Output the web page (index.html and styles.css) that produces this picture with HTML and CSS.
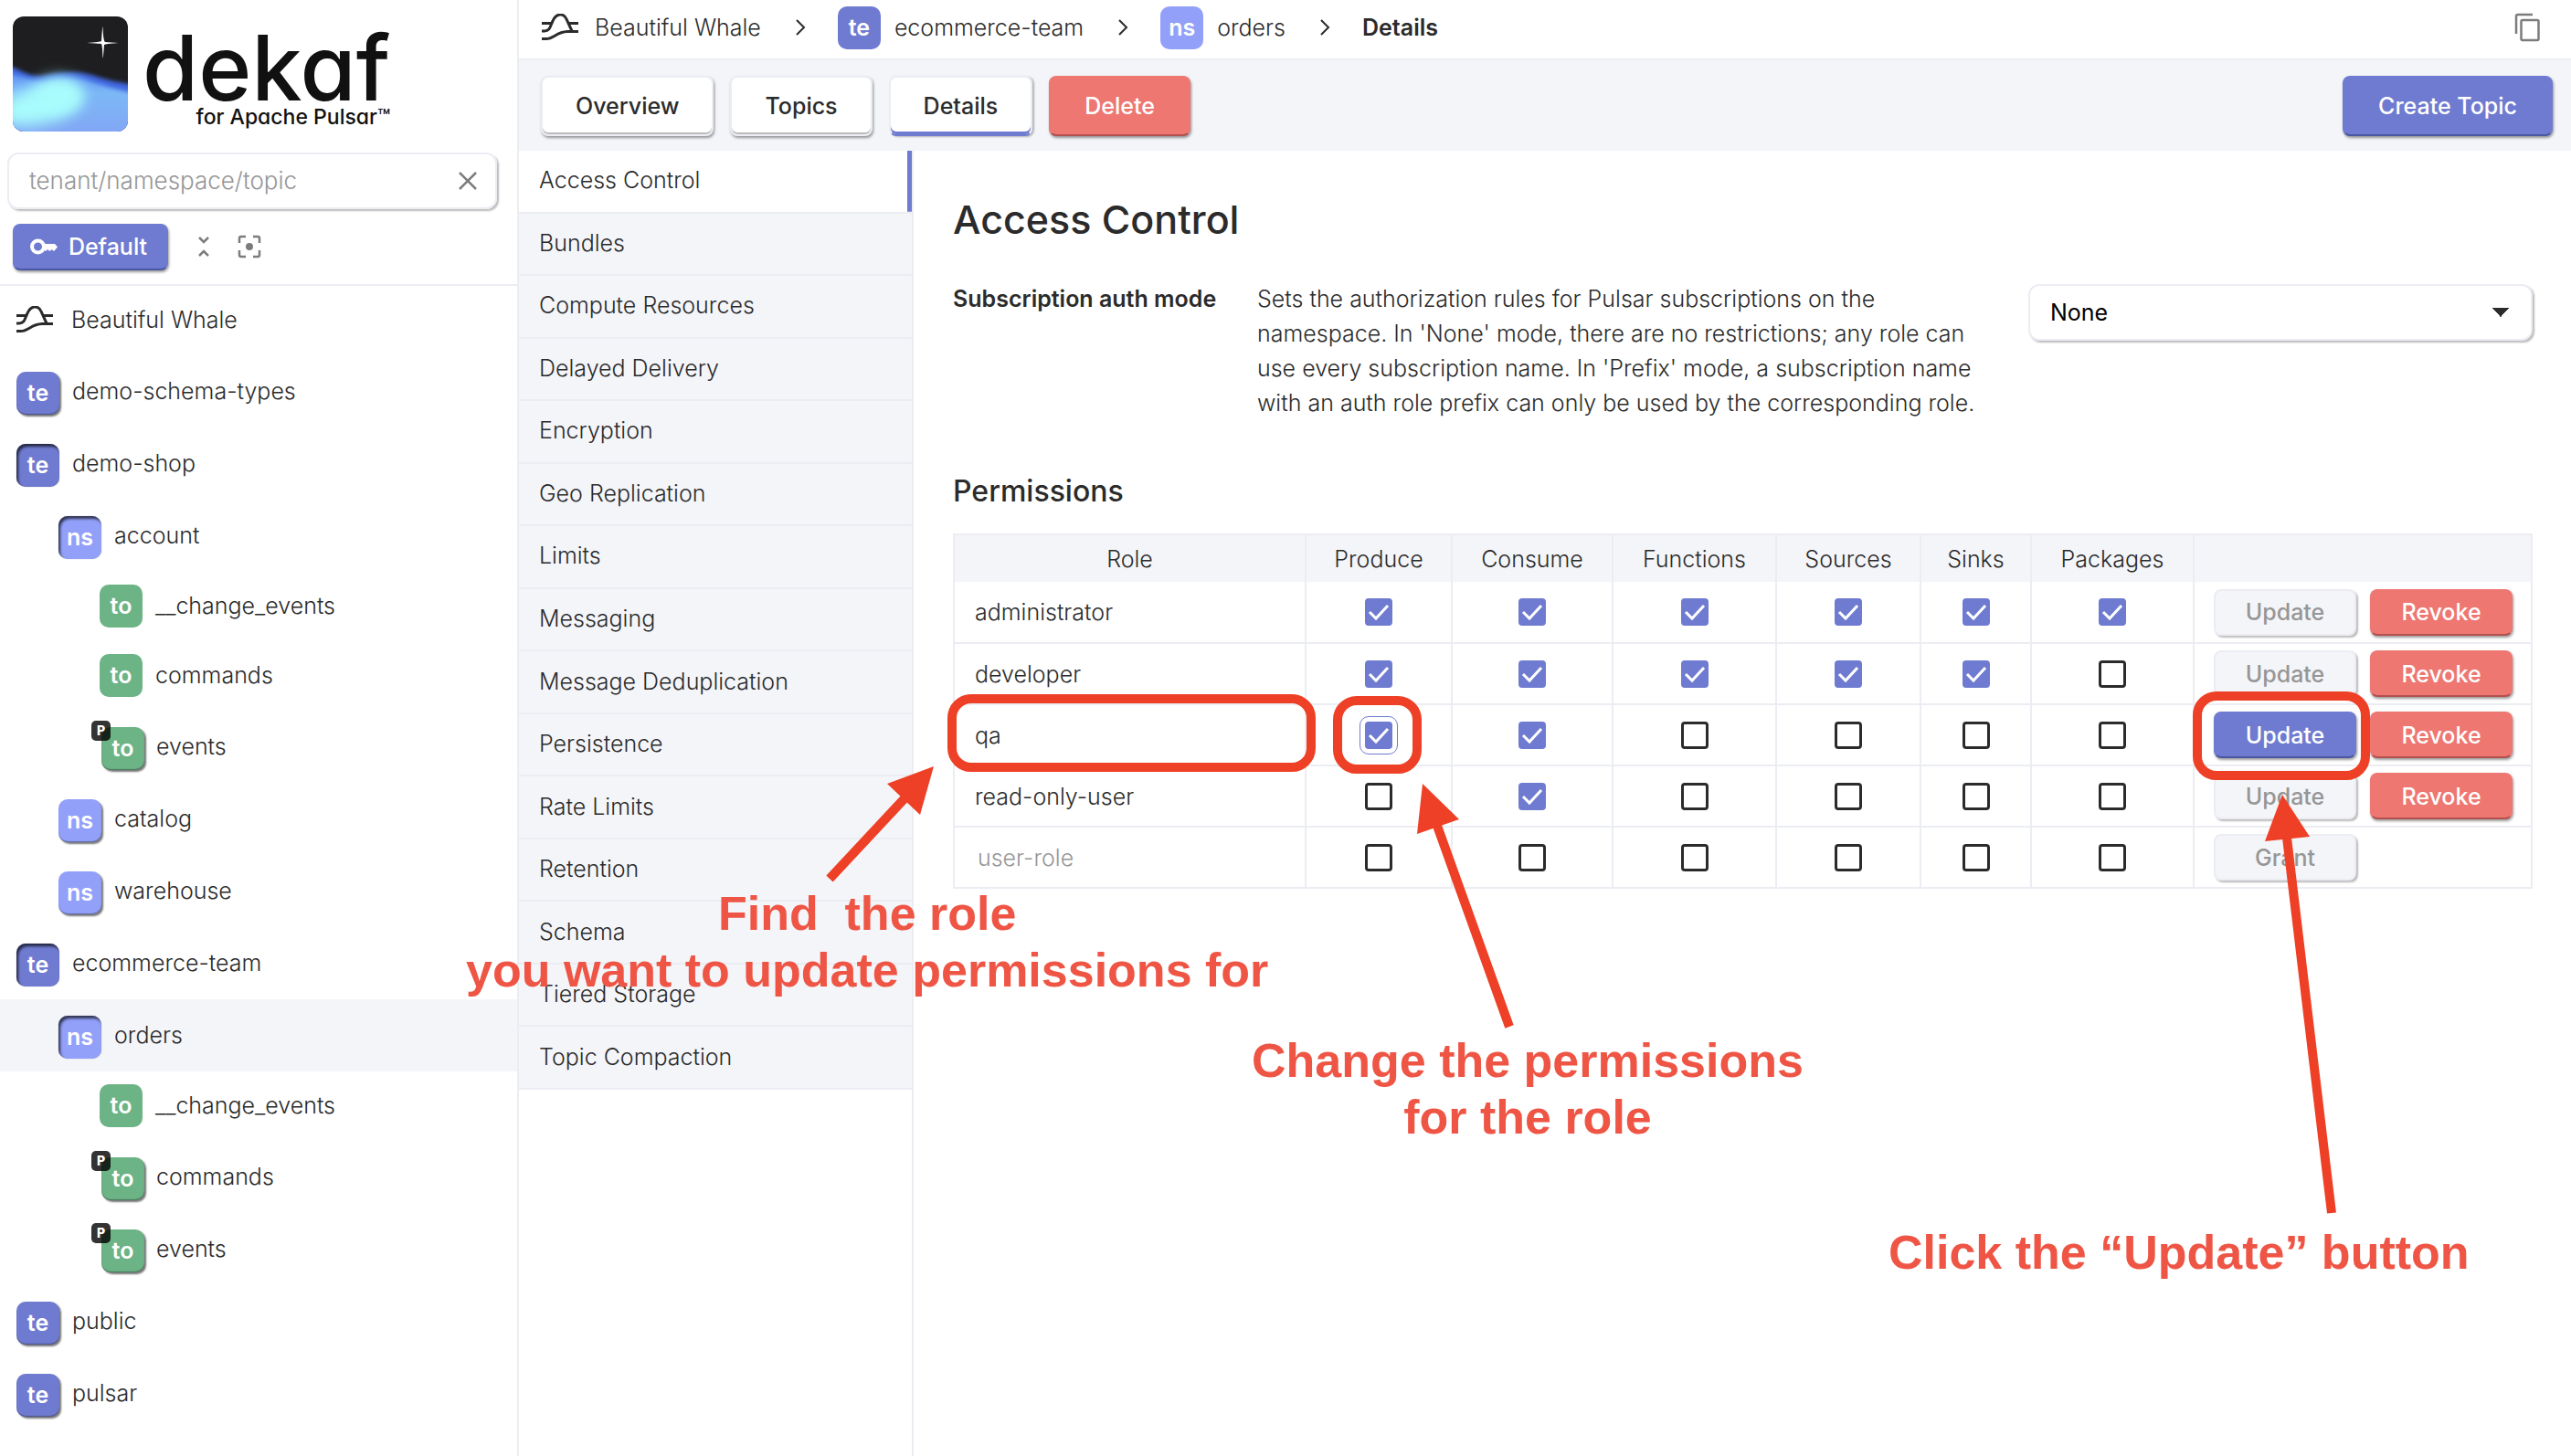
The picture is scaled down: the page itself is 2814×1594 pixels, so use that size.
FILE: index.html
```html
<!DOCTYPE html>
<html lang="en">
<head>
<meta charset="utf-8">
<title>Dekaf – Access Control</title>
<link rel="stylesheet" href="styles.css">
</head>
<body>
<svg class="sprite" aria-hidden="true">
  <symbol id="whale" viewBox="0 0 40 30"><g fill="none" stroke="#2b2b2b" stroke-width="3"><path d="M0 10.500H11M29 10.500H40"/><path d="M0 19H3C9 19 9 14 12 8C16 -1 24 -1 27 6L33 19"/><path d="M0 27.500H5C13 27.500 16 20 28 19.500H40"/></g></symbol>
  <symbol id="chevron" viewBox="0 0 12 18"><path d="M2 1L10 9L2 17" fill="none" stroke="#2b2b2b" stroke-width="2"/></symbol>
</svg>
<div class="app">
  <aside class="sidebar">
    <a class="brand" href="#">
      <svg class="brand-mark" viewBox="0 0 126 126" aria-hidden="true">
        <defs>
          <clipPath id="tile"><rect width="126" height="126" rx="12"/></clipPath>
          <filter id="soft" x="-20%" y="-20%" width="140%" height="140%"><feGaussianBlur stdDeviation="2"/></filter>
          <filter id="haze" x="-50%" y="-50%" width="200%" height="200%"><feGaussianBlur stdDeviation="8"/></filter>
          <linearGradient id="sea" x1="0" y1="0" x2="0" y2="1"><stop offset="0" stop-color="#5c90f4"/><stop offset=".3" stop-color="#7cb8f6"/><stop offset="1" stop-color="#84a4f4"/></linearGradient>
        </defs>
        <g clip-path="url(#tile)">
          <rect width="126" height="126" fill="#1e1e20"/>
          <path d="M-6 54C10 58 16 66 30 65C50 62 66 58 86 64C104 70 116 72 132 75V132H-6Z" fill="#4068e0" filter="url(#soft)"/>
          <path d="M-6 62C12 66 24 72 38 71C56 67 72 66 88 72C106 78 116 80 132 84V134H-6Z" fill="url(#sea)" filter="url(#soft)"/>
          <ellipse cx="30" cy="97" rx="46" ry="20" fill="#a8fcfc" transform="rotate(-14 30 97)" filter="url(#haze)"/>
          <ellipse cx="50" cy="86" rx="26" ry="19" fill="#a8fcfc" filter="url(#haze)"/>
          <path d="M98.500 11Q99 27 101 28Q116 29 116 29Q101 30 100 31Q99 45 98.500 46Q98 31 97 30Q82 29 81 29Q96 28 97 27Q98 11 98.500 11Z" fill="#fff"/>
        </g>
      </svg>
      <span class="brand-text"><span class="brand-name">dekaf</span><span class="brand-tag">for Apache Pulsar™</span></span>
    </a>
    <div class="search">
      <input type="text" placeholder="tenant/namespace/topic" aria-label="Filter by tenant, namespace or topic">
      <button class="icon-btn" aria-label="Clear filter"><svg width="20" height="20" viewBox="0 0 20 20"><path d="M1 1L19 19M19 1L1 19" stroke="#7c7c7c" stroke-width="2.500"/></svg></button>
    </div>
    <div class="tree-tools">
      <button class="btn primary small"><svg width="30" height="18" viewBox="0 0 30 18"><circle cx="8.500" cy="9" r="6.500" fill="none" stroke="#fff" stroke-width="4"/><path d="M14 6H27L30 9.500L26 14L23.500 12L21.500 14L19 12L17 14L14 12Z" fill="#fff"/></svg>Default</button>
      <button class="icon-btn" aria-label="Collapse all"><svg width="14" height="24" viewBox="0 0 14 24"><path d="M2 2L7 7L12 2M2 22L7 17L12 22" fill="none" stroke="#7c7c7c" stroke-width="2.500"/></svg></button>
      <button class="icon-btn" aria-label="Reveal selected"><svg width="26" height="26" viewBox="0 0 26 26"><path d="M2 9V4Q2 2 4 2H9M17 2H22Q24 2 24 4V9M24 17V22Q24 24 22 24H17M9 24H4Q2 24 2 22V17" fill="none" stroke="#7c7c7c" stroke-width="2.500"/><circle cx="13" cy="13" r="4" fill="#7c7c7c"/></svg></button>
    </div>
    <nav class="tree" aria-label="Resources">
      <a class="node flat" href="#"><svg class="whale"><use href="#whale"/></svg>Beautiful Whale</a>
      <a class="node" href="#"><span class="badge te up">te</span>demo-schema-types</a>
      <a class="node" href="#"><span class="badge te down">te</span>demo-shop</a>
      <a class="node l2" href="#"><span class="badge ns down">ns</span>account</a>
      <a class="node l3 flat" href="#"><span class="badge to">to</span>__change_events</a>
      <a class="node l3 flat" href="#"><span class="badge to">to</span>commands</a>
      <a class="node l3 part" href="#"><span class="badge to up">to<i class="mark">P</i></span>events</a>
      <a class="node l2" href="#"><span class="badge ns up">ns</span>catalog</a>
      <a class="node l2" href="#"><span class="badge ns up">ns</span>warehouse</a>
      <a class="node" href="#"><span class="badge te down">te</span>ecommerce-team</a>
      <a class="node l2 current" href="#"><span class="badge ns down">ns</span>orders</a>
      <a class="node l3 flat" href="#"><span class="badge to">to</span>__change_events</a>
      <a class="node l3 part" href="#"><span class="badge to up">to<i class="mark">P</i></span>commands</a>
      <a class="node l3 part" href="#"><span class="badge to up">to<i class="mark">P</i></span>events</a>
      <a class="node" href="#"><span class="badge te up">te</span>public</a>
      <a class="node" href="#"><span class="badge te up">te</span>pulsar</a>
    </nav>
  </aside>
  <div class="main">
    <header class="crumbs">
      <a href="#"><svg class="whale"><use href="#whale"/></svg><span class="crumb-root">Beautiful Whale</span></a>
      <svg class="chevron"><use href="#chevron"/></svg>
      <a href="#"><span class="badge te">te</span>ecommerce-team</a>
      <svg class="chevron"><use href="#chevron"/></svg>
      <a href="#"><span class="badge ns">ns</span>orders</a>
      <svg class="chevron"><use href="#chevron"/></svg>
      <b>Details</b>
      <button class="icon-btn copy" aria-label="Copy name"><svg width="28" height="32" viewBox="0 0 28 32"><g fill="none" stroke="#7c7c7c" stroke-width="2.500"><path d="M2 23V4Q2 2 4 2H20"/><rect x="7.500" y="8" width="19" height="22" rx="1.500"/></g></svg></button>
    </header>
    <div class="toolbar">
      <button class="btn">Overview</button>
      <button class="btn">Topics</button>
      <button class="btn active">Details</button>
      <button class="btn danger">Delete</button>
      <button class="btn primary create">Create Topic</button>
    </div>
    <div class="body">
      <nav class="sections" aria-label="Sections">
        <div class="section-list">
          <a class="selected" href="#">Access Control</a>
          <a href="#">Bundles</a>
          <a href="#">Compute Resources</a>
          <a href="#">Delayed Delivery</a>
          <a href="#">Encryption</a>
          <a href="#">Geo Replication</a>
          <a href="#">Limits</a>
          <a href="#">Messaging</a>
          <a href="#">Message Deduplication</a>
          <a href="#">Persistence</a>
          <a href="#">Rate Limits</a>
          <a href="#">Retention</a>
          <a href="#">Schema</a>
          <a href="#">Tiered Storage</a>
          <a href="#">Topic Compaction</a>
        </div>
      </nav>
      <main class="content">
        <h1>Access Control</h1>
        <div class="field">
          <label for="auth-mode">Subscription auth mode</label>
          <p>Sets the authorization rules for Pulsar subscriptions on the namespace. In 'None' mode, there are no restrictions; any role can use every subscription name. In 'Prefix' mode, a subscription name with an auth role prefix can only be used by the corresponding role.</p>
          <select id="auth-mode"><option>None</option><option>Prefix</option></select>
        </div>
        <h2>Permissions</h2>
        <table class="perms">
          <colgroup><col class="c-role"><col class="c-produce"><col class="c-consume"><col class="c-functions"><col class="c-sources"><col class="c-sinks"><col class="c-packages"><col></colgroup>
          <thead><tr><th>Role</th><th>Produce</th><th>Consume</th><th>Functions</th><th>Sources</th><th>Sinks</th><th>Packages</th><th></th></tr></thead>
          <tbody>
            <tr><td>administrator</td><td><input type="checkbox" checked aria-label="administrator: produce"></td><td><input type="checkbox" checked aria-label="administrator: consume"></td><td><input type="checkbox" checked aria-label="administrator: functions"></td><td><input type="checkbox" checked aria-label="administrator: sources"></td><td><input type="checkbox" checked aria-label="administrator: sinks"></td><td><input type="checkbox" checked aria-label="administrator: packages"></td><td><div class="actions"><button class="btn small" disabled>Update</button><button class="btn small danger">Revoke</button></div></td></tr>
            <tr><td>developer</td><td><input type="checkbox" checked aria-label="developer: produce"></td><td><input type="checkbox" checked aria-label="developer: consume"></td><td><input type="checkbox" checked aria-label="developer: functions"></td><td><input type="checkbox" checked aria-label="developer: sources"></td><td><input type="checkbox" checked aria-label="developer: sinks"></td><td><input type="checkbox" aria-label="developer: packages"></td><td><div class="actions"><button class="btn small" disabled>Update</button><button class="btn small danger">Revoke</button></div></td></tr>
            <tr><td>qa</td><td><input type="checkbox" class="focused" checked aria-label="qa: produce"></td><td><input type="checkbox" checked aria-label="qa: consume"></td><td><input type="checkbox" aria-label="qa: functions"></td><td><input type="checkbox" aria-label="qa: sources"></td><td><input type="checkbox" aria-label="qa: sinks"></td><td><input type="checkbox" aria-label="qa: packages"></td><td><div class="actions"><button class="btn small primary">Update</button><button class="btn small danger">Revoke</button></div></td></tr>
            <tr><td>read-only-user</td><td><input type="checkbox" aria-label="read-only-user: produce"></td><td><input type="checkbox" checked aria-label="read-only-user: consume"></td><td><input type="checkbox" aria-label="read-only-user: functions"></td><td><input type="checkbox" aria-label="read-only-user: sources"></td><td><input type="checkbox" aria-label="read-only-user: sinks"></td><td><input type="checkbox" aria-label="read-only-user: packages"></td><td><div class="actions"><button class="btn small" disabled>Update</button><button class="btn small danger">Revoke</button></div></td></tr>
            <tr><td><input type="text" class="new-role" placeholder="user-role" aria-label="New role"></td><td><input type="checkbox" aria-label="new role: produce"></td><td><input type="checkbox" aria-label="new role: consume"></td><td><input type="checkbox" aria-label="new role: functions"></td><td><input type="checkbox" aria-label="new role: sources"></td><td><input type="checkbox" aria-label="new role: sinks"></td><td><input type="checkbox" aria-label="new role: packages"></td><td><div class="actions"><button class="btn small" disabled>Grant</button></div></td></tr>
          </tbody>
        </table>
      </main>
    </div>
  </div>
</div>
<div class="guide">
  <div class="frame frame-role"></div>
  <div class="frame frame-box"></div>
  <div class="frame frame-update"></div>
  <svg class="arrows" width="2814" height="1594" aria-hidden="true">
    <g fill="#ee4026">
      <path d="M1022 839L971 858L1007 892Z"/><path d="M1557 858L1551 913L1597 897Z"/><path d="M2498 870L2479 921L2528 916Z"/>
    </g>
    <g stroke="#ee4026" stroke-width="10"><path d="M908 962L992 872M1652 1124L1573 904M2552 1328L2503 917"/></g>
  </svg>
  <p class="note note-role">Find&nbsp; the role<br>you want to update permissions for</p>
  <p class="note note-change">Change the permissions<br>for the role</p>
  <p class="note note-click">Click the “Update” button</p>
</div>
</body>
</html>
```

FILE: styles.css
```css
* { box-sizing: border-box; }
:root {
  --ink: #2b2b2b;
  --line: #ecedf3;
  --tint: #f4f5f9;
  --primary: #6f7bd0;
  --danger: #ee7772;
  --muted: #969696;
  --mark: #ee4026;
}
body {
  margin: 0;
  position: relative;
  font: 300 25px/38px Inter, "Liberation Sans", sans-serif;
  font-optical-sizing: none;
  color: var(--ink);
  background: #fff;
}
a { color: inherit; text-decoration: none; }
button, input, select { font: inherit; font-optical-sizing: none; color: inherit; }
h1, h2, p { margin: 0; }
.sprite { display: none; }
.app { display: flex; min-height: 100vh; }

.sidebar { flex: none; width: 568px; border-right: 2px solid var(--line); }
.brand { display: flex; gap: 16px; padding: 18px 14px 0; }
.brand-mark { flex: none; width: 126px; height: 126px; }
.brand-text { display: flex; flex-direction: column; align-items: flex-end; color: #111; font-feature-settings: "cv11"; font-optical-sizing: auto; }
.brand-name { font-weight: 500; font-size: 99px; line-height: 112px; }
.brand-tag { margin-top: -12px; font-weight: 500; font-size: 23px; line-height: 20px; }
.search {
  display: flex; align-items: center;
  margin: 23px 22px 0 8px; height: 62px; padding: 0 16px 0 22px;
  border: 2px solid var(--line); border-radius: 12px;
  box-shadow: 2px 2px 2px #0004;
}
.search input { flex: 1; min-width: 0; border: 0; outline: 0; padding: 0; background: none; font-size: 26px; }
::placeholder { color: var(--muted); opacity: 1; }
.icon-btn { display: flex; border: 0; padding: 4px; background: none; }
.tree-tools { display: flex; align-items: center; gap: 22px; height: 84px; padding: 0 14px; border-bottom: 2px solid var(--line); }
.tree-tools .btn.small { width: 170px; margin-right: 6px; padding: 0 4px 0 0; gap: 12px; }

.node { display: flex; align-items: center; gap: 14px; height: 79px; padding: 0 0 2px 18px; }
.node.flat { height: 76px; }
.node .badge { margin-top: 6px; }
.node.flat .badge { margin-top: 1px; }
.node.l2 { padding-left: 64px; }
.node.l3 { padding-left: 109px; }
.node.part { padding-left: 111px; gap: 13px; }
.node.current { background: var(--tint); }
.whale { flex: none; width: 40px; height: 30px; }
.node .whale { margin-right: 6px; }
.badge {
  position: relative; display: flex; align-items: center; justify-content: center;
  width: 47px; height: 47px; border-radius: 10px;
  color: #fff; font-weight: 600; line-height: 47px;
}
.te { background: var(--primary); }
.ns { background: #92a0f9; }
.to { background: #6cb386; }
.up { box-shadow: 2px 2px 2px #0008, inset 0 -1px 1px #0005; }
.down { box-shadow: inset 2px 3px 3px #000a, 0 0 1px #0006; }
.mark {
  position: absolute; left: -11px; top: -7px; width: 21px; height: 22px;
  border-radius: 5px; background: #000c; text-align: center;
  font: 800 14px/22px Inter, sans-serif;
}

.main { flex: 1; min-width: 0; display: flex; flex-direction: column; }
.crumbs { display: flex; align-items: center; height: 66px; padding: 0 30px 4px 25px; border-bottom: 2px solid var(--line); }
.crumbs a { display: flex; align-items: center; gap: 15px; }
.crumb-root { margin-left: 3px; }
.crumbs b { font-weight: 600; }
.chevron { width: 12px; height: 18px; margin: 0 35px 0 37px; }
.copy { margin-left: auto; }
.toolbar { display: flex; gap: 18px; padding: 17px 20px 16px 24px; background: var(--tint); }
.btn {
  display: flex; align-items: center; justify-content: center;
  height: 66px; padding: 0 36px; border: 2px solid var(--line); border-radius: 8px;
  background: #fff; font-weight: 500;
  box-shadow: 1px 2px 3px #0006, inset 0 -2px 0 #0004;
}
.btn.active { box-shadow: inset 0 -3px 0 var(--primary), 2px 1px 2px #0004; border-bottom-color: var(--primary); }
.btn.primary, .btn.danger { padding: 0 37px; color: #fff; border-color: transparent; background: var(--primary) border-box; box-shadow: 1px 2px 3px #0006; border-bottom: 2px solid #4c57a4; }
.btn.danger { background-color: var(--danger); border-bottom-color: #b4504d; }
.btn.small { height: 51px; }
.btn:disabled { background: var(--tint); color: var(--muted); box-shadow: 2px 2px 2px #0004; }
.create { margin-left: auto; }

.body { flex: 1; display: flex; }
.sections { flex: none; width: 432px; border-right: 2px solid var(--line); }
.section-list { display: grid; grid-auto-rows: 1fr; min-height: 1028px; }
.section-list a { display: flex; align-items: center; padding: 0 22px 2px; background: var(--tint); border-bottom: 2px solid var(--line); }
.section-list .selected { background: linear-gradient(var(--primary), var(--primary)) right / 5px 100% no-repeat #fff; }

.content { flex: 1; min-width: 0; padding: 50px 42px 50px 43px; }
h1 { font-weight: 500; font-size: 43px; line-height: 50px; }
.field { display: grid; grid-template-columns: 333px 1fr 552px; margin-top: 43px; align-items: start; }
.field label { font-weight: 600; }
.field p { padding-right: 40px; }
select {
  appearance: none; height: 62px; margin-top: 3px; padding: 0 22px;
  border: 2px solid var(--line); border-radius: 12px;
  color: #000; font-weight: 400; box-shadow: 2px 2px 2px #0004;
  background: linear-gradient(to bottom left, var(--ink) 50%, transparent 51%) right 33px center / 9px 10px no-repeat, linear-gradient(to bottom right, var(--ink) 50%, transparent 51%) right 24px center / 9px 10px no-repeat #fff;
}
h2 { margin-top: 58px; font-weight: 500; font-size: 32px; line-height: 40px; }
.perms { width: 100%; margin-top: 26px; table-layout: fixed; border-collapse: collapse; }
.c-role { width: 385px; }
.c-produce { width: 160px; }
.c-consume { width: 176px; }
.c-functions { width: 179px; }
.c-sources { width: 158px; }
.c-sinks { width: 121px; }
.c-packages { width: 178px; }
th, td { border: 2px solid var(--line); padding: 0; text-align: center; }
th { height: 52px; font-weight: 300; background: var(--tint); }
td { height: 67px; }
th { border-bottom: 0; }
tbody tr:first-child td { border-top: 0; }
td:first-child { text-align: left; padding-left: 22px; }
.new-role { width: 320px; border: 0; outline: 0; padding: 0 3px; background: none; }
.actions { display: flex; gap: 15px; padding-left: 21px; }
.actions .btn { width: 156px; padding: 0; }
input[type=checkbox] {
  appearance: none; display: block; margin: 0 auto; width: 30px; height: 30px;
  border: 3px solid var(--ink); border-radius: 4px; background: #fff;
}
input[type=checkbox]:checked {
  border-color: var(--primary);
  background: url('data:image/svg+xml,<svg xmlns="http://www.w3.org/2000/svg" viewBox="0 0 24 24"><path d="M2 12L9 19L22 5" fill="none" stroke="white" stroke-width="3"/></svg>') center / 24px no-repeat var(--primary);
}
input.focused { outline: 1px solid var(--primary); outline-offset: 5px; }

.guide { position: absolute; left: 0; top: 0; pointer-events: none; }
.frame { position: absolute; border: 10px solid var(--mark); border-radius: 26px; }
.frame-role { left: 1037px; top: 760px; width: 403px; height: 85px; }
.frame-box { left: 1459px; top: 762px; width: 97px; height: 85px; }
.frame-update { left: 2400px; top: 757px; width: 194px; height: 97px; }
.arrows { position: absolute; left: 0; top: 0; }
.note { position: absolute; white-space: nowrap; text-align: center; color: #ef5545; font: bold 52px/62px "Liberation Sans", Arial, sans-serif; }
.note-role { left: 510px; top: 969px; }
.note-change { left: 1370px; top: 1130px; }
.note-click { left: 2067px; top: 1340px; }
```
